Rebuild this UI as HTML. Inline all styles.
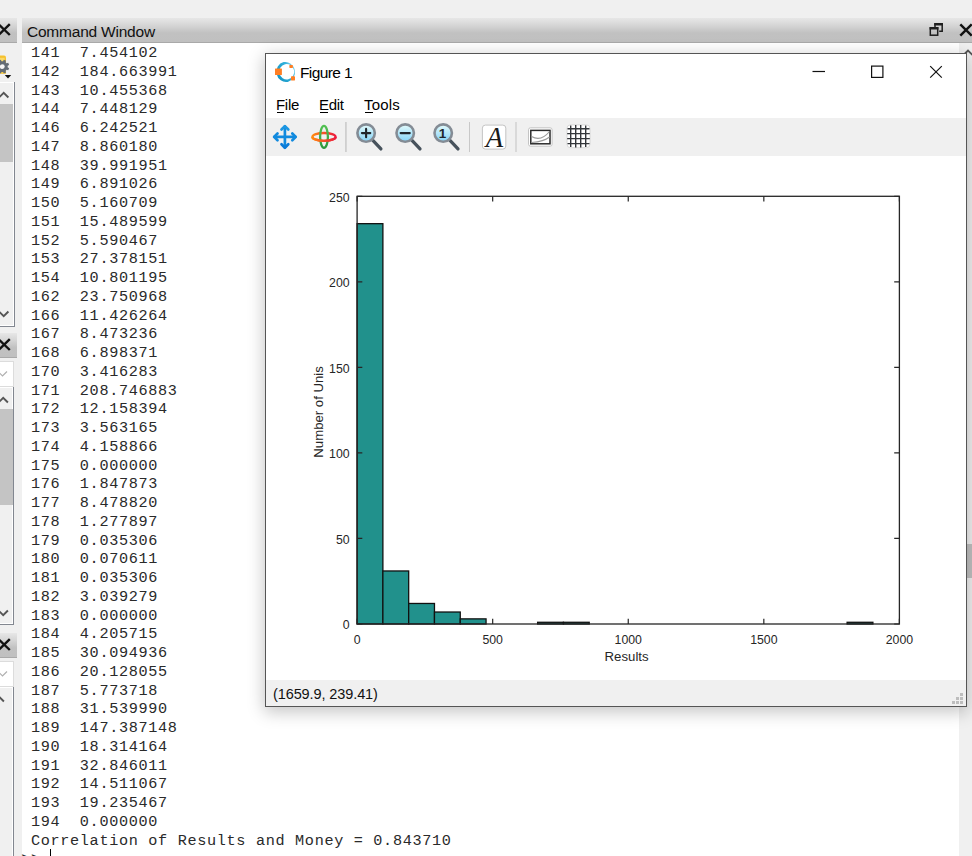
<!DOCTYPE html>
<html lang="en"><head><meta charset="utf-8"><title>Octave</title>
<style>
html,body{margin:0;padding:0;}
body{width:972px;height:856px;overflow:hidden;background:#f0f0f0;position:relative;font-family:"Liberation Sans",sans-serif;}
div,svg,span{position:absolute;box-sizing:border-box;}
#cwtitle{left:22px;top:18px;width:950px;height:25px;background:linear-gradient(#e7e7e7,#d6d6d6 30%,#c1c1c1 62%,#c0c0c0);border-bottom:1px solid #a9a9a9;}
#cwtitle .t{left:5px;top:5px;font-size:15.500px;line-height:18px;color:#111;white-space:nowrap;letter-spacing:-0.220px;}
#cwfloat{left:907.100px;top:4.200px;}
#cwclose{left:934.300px;top:1.500px;}
#term{left:22px;top:43px;width:938px;height:813px;background:#fff;font-family:"Liberation Mono",monospace;font-size:15.200px;color:#2a2a2a;}
#term .ln{position:absolute;left:8.900px;letter-spacing:0.670px;white-space:pre;line-height:18.750px;height:18.750px;}
#term .pr{left:-0.800px;}
#caret{left:28px;top:806px;width:1px;height:10px;background:#000;}
#cwscroll{left:959px;top:43px;width:13px;height:813px;background:#f0f0f0;}
#cwscroll .thumb{left:1px;top:501px;width:12px;height:34px;background:#c1c1c1;}
#cwscroll .up{left:0;top:5px;}
#leftp{left:0;top:0;width:22px;height:856px;overflow:hidden;}
.lt{left:0;width:17px;height:25px;background:linear-gradient(#e7e7e7,#d6d6d6 30%,#c1c1c1 62%,#c0c0c0);border-bottom:1px solid #a9a9a9;overflow:hidden;}
.lt svg{left:0;top:0;}
.sb{left:0;background:#f0f0f0;border-right:1px solid #828790;border-bottom:1px solid #828790;overflow:hidden;box-shadow:inset -1px -1px 0 #fff, inset 0 1px 0 #fff;}
.sb .th{left:0;width:12.500px;background:#c4c4c4;}
.sb .ch{left:0;}
.cb{left:0;width:14px;height:26px;background:#fff;border:1px solid #dcdcdc;border-left:none;overflow:hidden;}
.cb svg{left:0;top:0;}
#fig{left:265px;top:53px;width:702px;height:654px;border:1px solid #555;background:#fff;box-shadow:0 4px 16px 1px rgba(0,0,0,0.230);}
#figin{left:0;top:0;width:700px;height:652px;overflow:hidden;}
#ftitle{left:34px;top:10px;font-size:15.500px;line-height:18px;color:#000;white-space:nowrap;letter-spacing:-0.600px;}
.mi{top:42px;font-size:15px;line-height:18px;color:#000;white-space:nowrap;letter-spacing:-0.300px;}
.mu{top:58px;height:1px;background:#000;}
#tbar{left:0;top:64px;width:700px;height:38px;background:#f0f0f0;}
#plot{background:#fff;}
#sbar{left:0;top:626px;width:700px;height:26px;background:#f0f0f0;}
#sbar span{left:7px;top:4.500px;font-size:14.500px;line-height:18px;color:#111;white-space:nowrap;letter-spacing:-0.100px;}
#grip{left:684px;top:12px;}

</style></head>
<body>
<div id="leftp">
<!-- section A -->
<div class="lt" style="top:18px"><svg width="17" height="24" viewBox="0 0 17 24"><path d="M-1.500 6.200L9.800 17M9.800 6.200L-1.500 17" stroke="#111" stroke-width="2.400" fill="none"/></svg></div>
<svg id="gear" style="left:0;top:54px" width="14" height="26" viewBox="0 0 14 26">
<path d="M-4 3.500q0-2 2-2h6q2 0 2 2v16.200h-10z" fill="#f5c12e"/>
<path d="M-4 3.800h8.600v14.600h-8.600z" fill="#fbd968"/>
<g transform="translate(2.300 12.600)"><path d="M0.76 -5.35L1.53 -6.83L3.75 -5.91L3.24 -4.32L4.32 -3.24L5.91 -3.75L6.83 -1.53L5.35 -0.76L5.35 0.76L6.83 1.53L5.91 3.75L4.32 3.24L3.24 4.32L3.75 5.91L1.53 6.83L0.76 5.35L-0.76 5.35L-1.53 6.83L-3.75 5.91L-3.24 4.32L-4.32 3.24L-5.91 3.75L-6.83 1.53L-5.35 0.76L-5.35 -0.76L-6.83 -1.53L-5.91 -3.75L-4.32 -3.24L-3.24 -4.32L-3.75 -5.91L-1.53 -6.83L-0.76 -5.35Z" fill="#636c75"/><circle r="2.400" fill="#f6f6f6"/></g>
<path d="M4.800 20.900h6.400l-3.200 3.500z" fill="#111"/>
</svg>
<div class="sb" style="top:82px;height:245px;width:15px"><div class="th" style="top:22px;height:58px"></div>
<svg class="ch" style="top:8px" width="14" height="9" viewBox="0 0 14 9"><path d="M-1 7.500L3.700 2.800L8.400 7.500" fill="none" stroke="#555" stroke-width="1.900"/></svg>
<svg class="ch" style="top:228px" width="14" height="9" viewBox="0 0 14 9"><path d="M-1 1.500L3.700 6.200L8.400 1.500" fill="none" stroke="#555" stroke-width="1.900"/></svg>
</div>
<!-- section B -->
<div class="lt" style="top:333px"><svg width="17" height="24" viewBox="0 0 17 24"><path d="M-1.500 6.200L9.800 17M9.800 6.200L-1.500 17" stroke="#111" stroke-width="2.400" fill="none"/></svg></div>
<div class="cb" style="top:361px"><svg width="13" height="24" viewBox="0 0 13 24"><path d="M-1.500 10L2.500 14L7 9.500" fill="none" stroke="#b0b0b0" stroke-width="1.200"/></svg></div>
<div class="sb" style="top:387px;height:238px;width:14px"><div class="th" style="top:22px;height:96px"></div>
<svg class="ch" style="top:8px" width="13" height="9" viewBox="0 0 13 9"><path d="M-1.500 7.500L3.200 2.800L7.900 7.500" fill="none" stroke="#555" stroke-width="1.900"/></svg>
<svg class="ch" style="top:222px" width="13" height="9" viewBox="0 0 13 9"><path d="M-1.500 1.500L3.200 6.200L7.900 1.500" fill="none" stroke="#555" stroke-width="1.900"/></svg>
</div>
<!-- section C -->
<div class="lt" style="top:633px"><svg width="17" height="24" viewBox="0 0 17 24"><path d="M-1.500 6.200L9.800 17M9.800 6.200L-1.500 17" stroke="#111" stroke-width="2.400" fill="none"/></svg></div>
<div class="cb" style="top:661px"><svg width="13" height="24" viewBox="0 0 13 24"><path d="M-1.500 10L2.500 14L7 9.500" fill="none" stroke="#b0b0b0" stroke-width="1.200"/></svg></div>
<div class="sb" style="top:687px;height:180px;width:14px">
<svg class="ch" style="top:6.500px" width="13" height="9" viewBox="0 0 13 9"><path d="M-5.500 7.500L-0.800 2.800L3.900 7.500" fill="none" stroke="#555" stroke-width="1.900"/></svg>
</div>
</div>

<div id="cwtitle"><span class="t">Command Window</span>
<svg id="cwfloat" width="16" height="16" viewBox="0 0 16 16"><path d="M6 5.200V1.800h7.200v7.400H10.200" fill="none" stroke="#1e1e1e" stroke-width="1.500"/><path d="M5.300 2.300h8.600" stroke="#1e1e1e" stroke-width="2.400"/><rect x="1.300" y="5.800" width="7.400" height="7.400" fill="none" stroke="#1e1e1e" stroke-width="1.500"/><path d="M0.600 6.300h8.800" stroke="#1e1e1e" stroke-width="2.400"/></svg>
<svg id="cwclose" width="20" height="20" viewBox="0 0 20 20"><path d="M4.300 4.300L15.700 15.700M15.700 4.300L4.300 15.700" stroke="#111" stroke-width="2.400" fill="none"/></svg>
</div>
<div id="term">
<div class="ln" style="top:1px">141  7.454102</div>
<div class="ln" style="top:20px">142  184.663991</div>
<div class="ln" style="top:39px">143  10.455368</div>
<div class="ln" style="top:57px">144  7.448129</div>
<div class="ln" style="top:76px">146  6.242521</div>
<div class="ln" style="top:95px">147  8.860180</div>
<div class="ln" style="top:114px">148  39.991951</div>
<div class="ln" style="top:132px">149  6.891026</div>
<div class="ln" style="top:151px">150  5.160709</div>
<div class="ln" style="top:170px">151  15.489599</div>
<div class="ln" style="top:189px">152  5.590467</div>
<div class="ln" style="top:207px">153  27.378151</div>
<div class="ln" style="top:226px">154  10.801195</div>
<div class="ln" style="top:245px">162  23.750968</div>
<div class="ln" style="top:264px">166  11.426264</div>
<div class="ln" style="top:282px">167  8.473236</div>
<div class="ln" style="top:301px">168  6.898371</div>
<div class="ln" style="top:320px">170  3.416283</div>
<div class="ln" style="top:339px">171  208.746883</div>
<div class="ln" style="top:357px">172  12.158394</div>
<div class="ln" style="top:376px">173  3.563165</div>
<div class="ln" style="top:395px">174  4.158866</div>
<div class="ln" style="top:414px">175  0.000000</div>
<div class="ln" style="top:432px">176  1.847873</div>
<div class="ln" style="top:451px">177  8.478820</div>
<div class="ln" style="top:470px">178  1.277897</div>
<div class="ln" style="top:489px">179  0.035306</div>
<div class="ln" style="top:507px">180  0.070611</div>
<div class="ln" style="top:526px">181  0.035306</div>
<div class="ln" style="top:545px">182  3.039279</div>
<div class="ln" style="top:564px">183  0.000000</div>
<div class="ln" style="top:582px">184  4.205715</div>
<div class="ln" style="top:601px">185  30.094936</div>
<div class="ln" style="top:620px">186  20.128055</div>
<div class="ln" style="top:639px">187  5.773718</div>
<div class="ln" style="top:657px">188  31.539990</div>
<div class="ln" style="top:676px">189  147.387148</div>
<div class="ln" style="top:695px">190  18.314164</div>
<div class="ln" style="top:714px">191  32.846011</div>
<div class="ln" style="top:732px">192  14.511067</div>
<div class="ln" style="top:751px">193  19.235467</div>
<div class="ln" style="top:770px">194  0.000000</div>
<div class="ln" style="top:789px">Correlation of Results and Money = 0.843710</div>
<div class="ln pr" style="top:807px">&gt;&gt;</div>
<div id="caret"></div>
</div>
<div id="cwscroll"><div class="thumb"></div>
<svg class="up" width="13" height="10" viewBox="0 0 13 10"><path d="M4 7.500L9 2.500L14 7.500" fill="none" stroke="#555" stroke-width="1.800"/></svg>
</div>
<div id="fig"><div id="figin">
<svg id="ologo" width="24" height="24" viewBox="0 0 24 24" style="left:7px;top:6px">
<defs><linearGradient id="lg1" x1="0" y1="0.300" x2="1" y2="0"><stop offset="0" stop-color="#1797c6"/><stop offset="0.600" stop-color="#35b3dc"/><stop offset="1" stop-color="#9bdcf0"/></linearGradient></defs>
<path fill-rule="evenodd" fill="url(#lg1)" transform="rotate(-12 12.700 12)" d="M3.400 12a9.300 10.100 0 1 0 18.600 0a9.300 10.100 0 1 0 -18.600 0zM6.300 12a7.450 7.700 0 1 1 14.900 0a7.450 7.700 0 1 1 -14.900 0z"/>
<rect x="2" y="8.400" width="6.900" height="6.700" rx="0.500" fill="#ff7f24"/>
<rect x="16.400" y="5.100" width="3.500" height="2.900" rx="0.400" fill="#ff7f24"/>
<rect x="18" y="16.300" width="4" height="4.200" rx="0.400" fill="#ff7f24"/>
</svg>
<span id="ftitle">Figure 1</span>
<svg id="wctl" width="150" height="36" viewBox="0 0 150 36" style="left:540px;top:0">
<path d="M6.500 17.500h12.500" stroke="#111" stroke-width="1.200" fill="none"/>
<rect x="65.600" y="12.100" width="11.300" height="11.300" fill="none" stroke="#111" stroke-width="1.200"/>
<path d="M124.200 12.100l11.600 11.600M135.800 12.100l-11.600 11.600" stroke="#111" stroke-width="1.200" fill="none"/>
</svg>
<span class="mi" style="left:10px">File</span><span class="mi" style="left:53px">Edit</span><span class="mi" style="left:98px;letter-spacing:0.200px">Tools</span>
<div class="mu" style="left:10.500px;width:7.500px"></div><div class="mu" style="left:53.500px;width:8px"></div><div class="mu" style="left:98.500px;width:8px"></div>
<div id="tbar">
<svg width="340" height="38" viewBox="0 0 340 38" style="left:0;top:0">
<defs>
<linearGradient id="gb" x1="0" y1="0" x2="0" y2="1"><stop offset="0" stop-color="#1f9be3"/><stop offset="1" stop-color="#0877d6"/></linearGradient>
<linearGradient id="gg" x1="0" y1="0" x2="0" y2="1"><stop offset="0" stop-color="#52c152"/><stop offset="1" stop-color="#2c983c"/></linearGradient>
<linearGradient id="gr" x1="0" y1="0" x2="1" y2="0"><stop offset="0" stop-color="#ff8a10"/><stop offset="1" stop-color="#ec1b3e"/></linearGradient>
<linearGradient id="gl" x1="0" y1="0" x2="0" y2="1"><stop offset="0" stop-color="#e4fbfb"/><stop offset="1" stop-color="#84d3f8"/></linearGradient>
</defs>
<!-- pan: center 18.900,18.900 (abs 284.900,136.900) -->
<g transform="translate(18.900 18.900)" stroke="url(#gb)" stroke-width="2.700" fill="none" stroke-linecap="round" stroke-linejoin="round">
<path d="M0 -10.500V10.500M-10.500 0H10.500" stroke="#128ade"/>
<path d="M-3.400 -7.400L0 -10.800L3.400 -7.400" stroke="#1b96e2"/><path d="M-3.400 7.400L0 10.800L3.400 7.400" stroke="#0b7bd8"/>
<path d="M-7.400 -3.400L-10.800 0L-7.400 3.400" stroke="#128ade"/><path d="M7.400 -3.400L10.800 0L7.400 3.400" stroke="#128ade"/>
</g>
<!-- rotate: center 58,18.900 -->
<g transform="translate(58 18.900)" fill="none" stroke-width="2.300">
<ellipse rx="11.600" ry="3.900" stroke="url(#gr)"/>
<ellipse rx="3.900" ry="11" stroke="url(#gg)"/>
<path d="M-11.600 0A11.600 3.900 0 0 0 11.600 0.010" stroke="url(#gr)"/>
</g>
<rect x="79" y="4" width="1.800" height="30" fill="#cfcfcf"/>
<!-- zoom in: center 100.100,15.100 -->
<g transform="translate(100.100 15.100)">
<path d="M6.300 6.800L14.800 15.800" stroke="#47525c" stroke-width="3.300" stroke-linecap="round"/>
<circle r="8.700" fill="url(#gl)" stroke="#848c95" stroke-width="2.600"/>
<path d="M-4.200 0H4.200M0 -4.200V4.200" stroke="#20262c" stroke-width="2.100" stroke-linecap="round"/>
</g>
<g transform="translate(139.200 15.100)">
<path d="M6.300 6.800L14.800 15.800" stroke="#47525c" stroke-width="3.300" stroke-linecap="round"/>
<circle r="8.700" fill="url(#gl)" stroke="#848c95" stroke-width="2.600"/>
<path d="M-4.600 0H4.600" stroke="#20262c" stroke-width="2.100" stroke-linecap="round"/>
</g>
<g transform="translate(177.200 15.100)">
<path d="M6.300 6.800L14.800 15.800" stroke="#47525c" stroke-width="3.300" stroke-linecap="round"/>
<circle r="8.700" fill="url(#gl)" stroke="#848c95" stroke-width="2.600"/>
<text x="-0.600" y="4.700" text-anchor="middle" font-family="Liberation Sans, sans-serif" font-weight="bold" font-size="13.500" fill="#20262c">1</text>
</g>
<rect x="203" y="4" width="1" height="30" fill="#c8c8c8"/>
<!-- A icon: abs 481.900..505.800 x, 124.600..149.100 y -->
<rect x="216.400" y="7.100" width="23.400" height="24" rx="3" fill="#fff" stroke="#c4c4c4" stroke-width="1"/>
<text x="228.400" y="28.800" text-anchor="middle" font-family="Liberation Serif, serif" font-style="italic" font-size="28.500" fill="#1a1a1a">A</text>
<rect x="249.300" y="4" width="1.400" height="30" fill="#cfcfcf"/>
<!-- axes icon abs 528..552.200 , 127.300..146.600 -->
<rect x="262.500" y="9.800" width="23.600" height="18.400" rx="2" fill="#fff" stroke="#c4c4c4" stroke-width="1"/>
<rect x="264.800" y="12.400" width="19.200" height="13.400" fill="none" stroke="#2a2a2a" stroke-width="1.500"/>
<path d="M265.500 18.500Q275 24 283.500 13.500M265.500 24.500Q278 23.500 283.500 19" fill="none" stroke="#9a9a9a" stroke-width="1.100"/>
<!-- grid icon abs 567..590, 124.900..147.700 -->
<rect x="301" y="6.900" width="23" height="22.800" rx="3.500" fill="#fff" stroke="#d0d0d0" stroke-width="0.800"/>
<path d="M304.700 7.500v21.600M309.700 7v22.600M314.700 7v22.600M319.700 7.500v21.600M301.500 10.700h22M301.200 15.600h22.600M301.200 20.600h22.600M301.500 25.600h22" stroke="#33363a" stroke-width="1.400" fill="none"/>
</svg>

</div>
<svg id="plot" width="700" height="524" viewBox="0 0 700 524" style="left:0;top:102px">
<rect x="91.1" y="67.67" width="25.79" height="400.33" fill="#21918c" stroke="#111" stroke-width="1.300"/>
<rect x="116.89" y="414.97" width="25.79" height="53.03" fill="#21918c" stroke="#111" stroke-width="1.300"/>
<rect x="142.68" y="447.47" width="25.79" height="20.53" fill="#21918c" stroke="#111" stroke-width="1.300"/>
<rect x="168.47" y="456.02" width="25.79" height="11.98" fill="#21918c" stroke="#111" stroke-width="1.300"/>
<rect x="194.26" y="462.87" width="25.79" height="5.13" fill="#21918c" stroke="#111" stroke-width="1.300"/>
<rect x="271.63" y="466.29" width="25.79" height="1.71" fill="#21918c" stroke="#111" stroke-width="1.300"/>
<rect x="297.42" y="466.29" width="25.79" height="1.71" fill="#21918c" stroke="#111" stroke-width="1.300"/>
<rect x="581.11" y="466.29" width="25.79" height="1.71" fill="#21918c" stroke="#111" stroke-width="1.300"/>
<rect x="91.1" y="40.3" width="542.30" height="427.70" fill="none" stroke="#262626" stroke-width="1.300"/>
<path d="M91.1 468.0v-5.2M91.1 40.3v5.2M226.68 468.0v-5.2M226.68 40.3v5.2M362.25 468.0v-5.2M362.25 40.3v5.2M497.83 468.0v-5.2M497.83 40.3v5.2M633.4 468.0v-5.2M633.4 40.3v5.2M91.1 468.0h5.2M633.4 468.0h-5.2M91.1 382.46h5.2M633.4 382.46h-5.2M91.1 296.92h5.2M633.4 296.92h-5.2M91.1 211.38h5.2M633.4 211.38h-5.2M91.1 125.84h5.2M633.4 125.84h-5.2M91.1 40.3h5.2M633.4 40.3h-5.2" stroke="#262626" stroke-width="1.200" fill="none"/>
<g font-family="Liberation Sans, sans-serif" font-size="12.300" fill="#262626">
<text x="91.1" y="487.7" text-anchor="middle">0</text>
<text x="226.68" y="487.7" text-anchor="middle">500</text>
<text x="362.25" y="487.7" text-anchor="middle">1000</text>
<text x="497.83" y="487.7" text-anchor="middle">1500</text>
<text x="633.4" y="487.7" text-anchor="middle">2000</text>
<text x="83.6" y="473.3" text-anchor="end">0</text>
<text x="83.6" y="387.76" text-anchor="end">50</text>
<text x="83.6" y="302.22" text-anchor="end">100</text>
<text x="83.6" y="216.68" text-anchor="end">150</text>
<text x="83.6" y="131.14" text-anchor="end">200</text>
<text x="83.6" y="45.6" text-anchor="end">250</text>
</g>
<text x="360.6" y="504.6" text-anchor="middle" font-family="Liberation Sans, sans-serif" font-size="13.200" fill="#262626">Results</text>
<text transform="translate(57.1 255.9) rotate(-90)" text-anchor="middle" font-family="Liberation Sans, sans-serif" font-size="13.200" fill="#262626">Number of Unis</text>
</svg>
<div id="sbar"><span>(1659.9, 239.41)</span>
<svg id="grip" width="14" height="14" viewBox="0 0 14 14"><path d="M10 1h3v3h-3zM6 5h3v3h-3zM10 5h3v3h-3zM2 9h3v3h-3zM6 9h3v3h-3zM10 9h3v3h-3z" fill="#bdbdbd"/></svg>
</div>
</div></div>
</body></html>
